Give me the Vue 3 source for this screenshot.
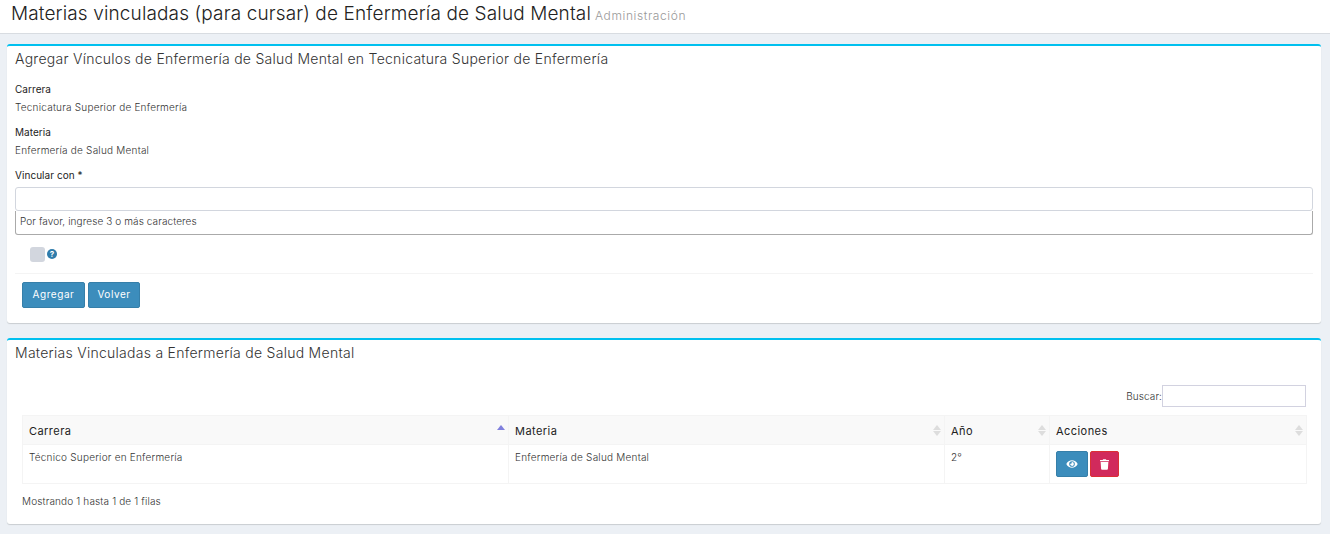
<script setup>
const rows = [
  { carrera: 'Técnico Superior en Enfermería', materia: 'Enfermería de Salud Mental', anio: '2°' }
];
</script>

<template>
  <div class="wrapper">
    <header class="page-header">
      <h1>Materias vinculadas (para cursar) de Enfermería de Salud Mental</h1>
      <small>Administración</small>
    </header>

    <section class="box form-box">
      <h3 class="box-title">Agregar Vínculos de Enfermería de Salud Mental en Tecnicatura Superior de Enfermería</h3>
      <div class="box-body">
        <div class="field">
          <div class="label">Carrera</div>
          <div class="value">Tecnicatura Superior de Enfermería</div>
        </div>
        <div class="field">
          <div class="label">Materia</div>
          <div class="value">Enfermería de Salud Mental</div>
        </div>
        <div class="label">Vincular con *</div>
        <input class="select-input" type="text" />
        <div class="select-hint">Por favor, ingrese 3 o más caracteres</div>
        <div class="check-row">
          <span class="check"></span>
          <span class="help">?</span>
        </div>
      </div>
      <div class="box-footer">
        <button class="btn btn-blue btn-add">Agregar</button>
        <button class="btn btn-blue btn-back">Volver</button>
      </div>
    </section>

    <section class="box table-box">
      <h3 class="box-title">Materias Vinculadas a Enfermería de Salud Mental</h3>
      <div class="table-area">
        <div class="search">
          <label>Buscar:</label>
          <input type="text" />
        </div>
        <table>
          <thead>
            <tr>
              <th class="col-carrera">Carrera<span class="sort asc"></span></th>
              <th class="col-materia">Materia<span class="sort"></span></th>
              <th class="col-anio">Año<span class="sort"></span></th>
              <th>Acciones<span class="sort"></span></th>
            </tr>
          </thead>
          <tbody>
            <tr v-for="row in rows" :key="row.carrera">
              <td>{{ row.carrera }}</td>
              <td>{{ row.materia }}</td>
              <td>{{ row.anio }}</td>
              <td>
                <button class="icon-btn btn-blue">
                  <svg width="12" height="10" viewBox="0 0 576 512"><path fill="#fff" d="M572.500 241.400C518.300 135.600 410.900 64 288 64S57.700 135.600 3.500 241.400a32.400 32.400 0 0 0 0 29.200C57.700 376.400 165.100 448 288 448s230.300-71.600 284.500-177.400a32.400 32.400 0 0 0 0-29.200zM288 400a144 144 0 1 1 144-144 143.900 143.900 0 0 1-144 144zm0-240a95.300 95.300 0 0 0-25.300 3.800 47.900 47.900 0 0 1-66.900 66.900A95.800 95.800 0 1 0 288 160z"/></svg>
                </button>
                <button class="icon-btn btn-red">
                  <svg width="9" height="11" viewBox="0 0 448 512"><path fill="#fff" d="M432 32H312l-9.400-18.700A24 24 0 0 0 281.100 0H166.800a23.700 23.700 0 0 0-21.400 13.300L136 32H16A16 16 0 0 0 0 48v32a16 16 0 0 0 16 16h416a16 16 0 0 0 16-16V48a16 16 0 0 0-16-16zM53.200 467a48 48 0 0 0 47.900 45h245.800a48 48 0 0 0 47.900-45L416 128H32z"/></svg>
                </button>
              </td>
            </tr>
          </tbody>
        </table>
        <div class="info">Mostrando 1 hasta 1 de 1 filas</div>
      </div>
    </section>
  </div>
</template>

<style>
html, body {
  margin: 0;
  background: #ecf0f5;
}
</style>

<style scoped>
.wrapper {
  background: #ecf0f5;
  min-height: 534px;
  font-family: "Inter", "Liberation Sans", sans-serif;
  color: #444;
  overflow: hidden;
}
.page-header {
  display: flex;
  align-items: baseline;
  gap: 4px;
  height: 33px;
  padding-left: 11px;
  background: #fff;
  border-bottom: 1px solid #d8dce1;
}
.page-header h1 {
  margin: 0;
  font-size: 19px;
  font-weight: 300;
  line-height: 28px;
  color: #222;
  letter-spacing: 0.13px;
}
.page-header small {
  font-size: 12px;
  font-weight: 300;
  color: #999;
  letter-spacing: 0.6px;
}
.box {
  margin: 0 9px 15px 7px;
  background: #fff;
  border-top: 2px solid #00c0ef;
  border-radius: 3px;
  box-shadow: 0 1px 1px rgba(0, 0, 0, 0.15);
}
.form-box {
  margin-top: 10px;
  height: 277px;
}
.table-box {
  height: 184px;
}
.box-title {
  margin: 0;
  padding: 5px 8px 0;
  font-size: 14px;
  font-weight: 300;
  line-height: 16px;
  color: #333;
  letter-spacing: 0.27px;
}
.box-body {
  padding: 15px 8px 0;
}
.label {
  font-size: 10px;
  line-height: 14px;
  color: #222;
  letter-spacing: 0.05px;
}
.value {
  margin-top: 4px;
  font-size: 10px;
  font-weight: 300;
  line-height: 14px;
  color: #333;
  letter-spacing: 0.22px;
}
.field {
  height: 43px;
}
.select-input {
  display: block;
  box-sizing: border-box;
  width: 100%;
  height: 24px;
  margin-top: 5px;
  border: 1px solid #d2d6de;
  border-radius: 3px;
  background: #fff;
  outline: none;
}
.select-hint {
  box-sizing: border-box;
  height: 24px;
  padding-left: 4px;
  font-size: 10px;
  font-weight: 300;
  line-height: 20px;
  color: #333;
  letter-spacing: 0.1px;
  border: 1px solid #aaa;
  border-top: none;
  border-radius: 0 0 3px 3px;
}
.check-row {
  display: flex;
  align-items: flex-start;
  gap: 2px;
  height: 38px;
  padding: 12px 0 0 15px;
  box-sizing: border-box;
}
.check {
  width: 15px;
  height: 15px;
  background: #d2d6de;
  border-radius: 3px;
}
.help {
  width: 10px;
  height: 10px;
  margin-top: 2px;
  border-radius: 50%;
  background: #2f7cab;
  color: #fff;
  font-size: 8px;
  font-weight: 700;
  line-height: 10px;
  text-align: center;
}
.box-footer {
  display: flex;
  gap: 3px;
  margin: 0 8px;
  padding: 8px 7px;
  border-top: 1px solid #f4f4f4;
}
.btn {
  height: 26px;
  padding: 0 0 2px;
  font: inherit;
  font-size: 10px;
  color: #fff;
  letter-spacing: 0.55px;
  border-radius: 2px;
  cursor: pointer;
}
.btn-add { width: 63px; }
.btn-back { width: 52px; }
.btn-blue {
  background: #3c8dbc;
  border: 1px solid #367fa9;
}
.btn-red {
  background: #d12a5c;
  border: 1px solid #dc2f35;
}
.table-area {
  padding: 24px 15px 0;
}
.search {
  display: flex;
  justify-content: flex-end;
  align-items: center;
  height: 22px;
}
.search label {
  font-size: 10px;
  font-weight: 300;
  color: #333;
  letter-spacing: 0.1px;
}
.search input {
  box-sizing: border-box;
  width: 144px;
  height: 22px;
  border: 1px solid #d2d2e0;
  outline: none;
}
table {
  width: 1285px;
  margin-top: 8px;
  border-collapse: collapse;
  table-layout: fixed;
}
th, td {
  box-sizing: border-box;
  border: 1px solid #f4f4f4;
  padding: 0 6px;
  text-align: left;
  font-weight: 400;
}
th {
  position: relative;
  height: 29px;
  padding-top: 1px;
  background: #f9f9f9;
  font-size: 11px;
  color: #222;
  letter-spacing: 0.45px;
}
td {
  height: 39px;
  padding-top: 6px;
  vertical-align: top;
  font-size: 10px;
  font-weight: 300;
  line-height: 12px;
  color: #333;
  letter-spacing: 0.22px;
}
.col-carrera { width: 486px; }
.col-materia { width: 436px; }
.col-anio { width: 105px; }
.sort {
  position: absolute;
  top: 9px;
  right: 3px;
  width: 8px;
  height: 11px;
}
.sort::before, .sort::after {
  content: "";
  position: absolute;
  left: 0;
  border-left: 4px solid transparent;
  border-right: 4px solid transparent;
}
.sort::before {
  top: 0;
  border-bottom: 5px solid #ddd;
}
.sort::after {
  bottom: 0;
  border-top: 5px solid #ddd;
}
.sort.asc::before {
  border-bottom-color: #8080dd;
}
.sort.asc::after {
  display: none;
}
.icon-btn {
  display: inline-flex;
  align-items: center;
  justify-content: center;
  height: 26px;
  padding: 0;
  border-radius: 2px;
  vertical-align: top;
}
.icon-btn.btn-blue { width: 32px; margin-right: 2px; }
.icon-btn.btn-red { width: 29px; }
.info {
  margin-top: 10px;
  font-size: 10px;
  font-weight: 300;
  line-height: 14px;
  color: #333;
  letter-spacing: 0.15px;
}
</style>
